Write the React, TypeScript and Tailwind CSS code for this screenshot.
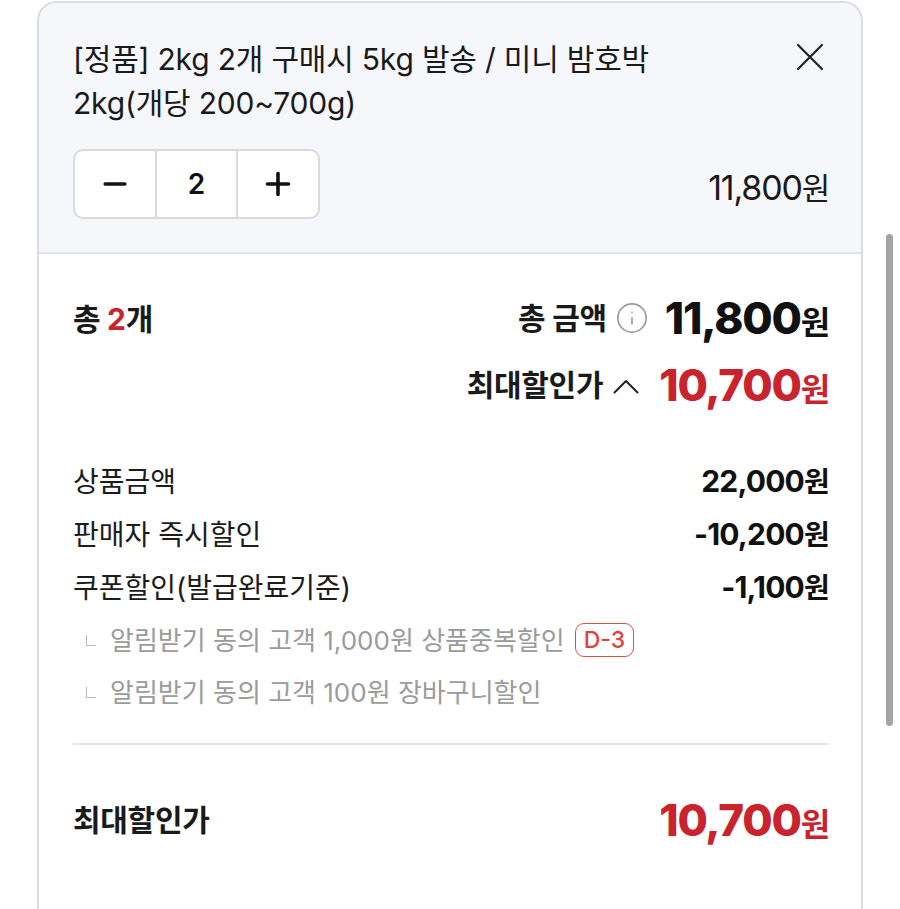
import { Info, Minus, Plus } from "lucide-react";

const font = { fontFamily: '"Inter", "Noto Sans CJK KR", sans-serif' };

function PriceRow({ label, value }: { label: string; value: string }) {
  return (
    <div className="flex h-[53px] items-center justify-between">
      <span className="text-[28px] text-[#1c1c1c]">{label}</span>
      <span className="text-[30px] font-bold tracking-[-0.8px] text-[#111]">
        {value}
        <span className="text-[28px]">원</span>
      </span>
    </div>
  );
}

function SubRow({ text, badge }: { text: string; badge?: string }) {
  return (
    <div className="flex h-[52px] items-center">
      <span className="ml-[13px] mr-[14px] h-[11px] w-[10px] border-b-[1.5px] border-l-[1.5px] border-[#b9b9b9]" />
      <span className="text-[26px] text-[#9b9b9b]">{text}</span>
      {badge ? (
        <span className="ml-[10px] flex h-[34px] items-center rounded-[9px] border-[1.5px] border-[#d9534a] px-[8px] text-[23px] font-medium text-[#d9463e]">
          {badge}
        </span>
      ) : null}
    </div>
  );
}

export default function App() {
  return (
    <div className="relative h-[909px] w-[900px] overflow-hidden bg-white" style={font}>
      <div className="ml-[37px] mt-[1px] w-[826px] overflow-hidden rounded-t-[20px] border-2 border-[#dcdcdc]">
        {/* selected option */}
        <div className="border-b-2 border-[#e3e4e6] bg-[#f6f7fa] pb-[33px] pl-[34px] pr-[32px] pt-[34px]">
          <div className="flex items-start justify-between">
            <p className="w-[620px] text-[30px] leading-[44px] tracking-[-0.2px] text-[#1a1a1a]">
              [정품] 2kg 2개 구매시 5kg 발송 / 미니 밤호박 2kg(개당 200~700g)
            </p>
            <svg className="mr-[5px] mt-[6px]" width="28" height="28" viewBox="0 0 28 28" fill="none">
              <path d="M2 2L26 26M26 2L2 26" stroke="#222" strokeWidth="2.2" strokeLinecap="round" />
            </svg>
          </div>
          <div className="mt-[24px] flex items-center justify-between">
            <div className="flex h-[70px] overflow-hidden rounded-[10px] border-2 border-[#dadada] bg-white">
              <button className="flex w-[80px] items-center justify-center">
                <Minus className="h-[34px] w-[34px] text-[#111]" strokeWidth={2.4} />
              </button>
              <div className="flex w-[83px] items-center justify-center border-x-2 border-[#dadada] text-[28px] font-semibold text-[#111]">
                2
              </div>
              <button className="flex w-[80px] items-center justify-center">
                <Plus className="h-[36px] w-[36px] text-[#111]" strokeWidth={2.4} />
              </button>
            </div>
            <span className="mt-[6px] text-[34px] tracking-[-1.2px] text-[#1a1a1a]">
              11,800<span className="text-[31px]">원</span>
            </span>
          </div>
        </div>

        {/* totals */}
        <div className="bg-white pb-[120px] pl-[34px] pr-[32px] pt-[38px]">
          <div className="flex items-start justify-between">
            <span className="mt-[5px] text-[30px] font-bold tracking-[-0.3px] text-[#1a1a1a]">
              총 <span className="text-[#c9232d]">2</span>개
            </span>
            <div className="flex flex-col items-end">
              <div className="flex h-[52px] items-center">
                <span className="text-[30px] font-bold tracking-[-0.3px] text-[#1a1a1a]">총 금액</span>
                <Info className="ml-[8px] h-[34px] w-[34px] text-[#9a9a9a]" strokeWidth={1.2} />
                <span className="ml-[16px] text-[44px] font-extrabold tracking-[-1.2px] text-[#111]">
                  11,800<span className="text-[32px] font-bold">원</span>
                </span>
              </div>
              <div className="mt-[15px] flex h-[52px] items-center">
                <span className="text-[30px] font-bold tracking-[-0.3px] text-[#1a1a1a]">최대할인가</span>
                <svg className="ml-[10px] mt-[2px]" width="26" height="15" viewBox="0 0 26 15" fill="none">
                  <path d="M1.5 13.5L13 2L24.5 13.5" stroke="#222" strokeWidth="2" strokeLinecap="round" strokeLinejoin="round" />
                </svg>
                <span className="ml-[20px] text-[44px] font-extrabold tracking-[-1.2px] text-[#c9232d]">
                  10,700<span className="text-[32px] font-bold">원</span>
                </span>
              </div>
            </div>
          </div>

          <div className="mt-[44px]">
            <PriceRow label="상품금액" value="22,000" />
            <PriceRow label="판매자 즉시할인" value="-10,200" />
            <PriceRow label="쿠폰할인(발급완료기준)" value="-1,100" />
            <SubRow text="알림받기 동의 고객 1,000원 상품중복할인" badge="D-3" />
            <SubRow text="알림받기 동의 고객 100원 장바구니할인" />
          </div>

          <div className="mt-[25px] h-[2px] bg-[#e6e6e6]" />

          <div className="mt-[42px] flex items-center justify-between">
            <span className="text-[30px] font-bold tracking-[-0.3px] text-[#1a1a1a]">최대할인가</span>
            <span className="text-[44px] font-extrabold tracking-[-1.2px] text-[#c9232d]">
              10,700<span className="text-[32px] font-bold">원</span>
            </span>
          </div>
        </div>
      </div>

      {/* overlay scrollbar */}
      <div className="absolute left-[886px] top-[234px] h-[492px] w-[7px] rounded-full bg-[#a4a4a4]" />
    </div>
  );
}
